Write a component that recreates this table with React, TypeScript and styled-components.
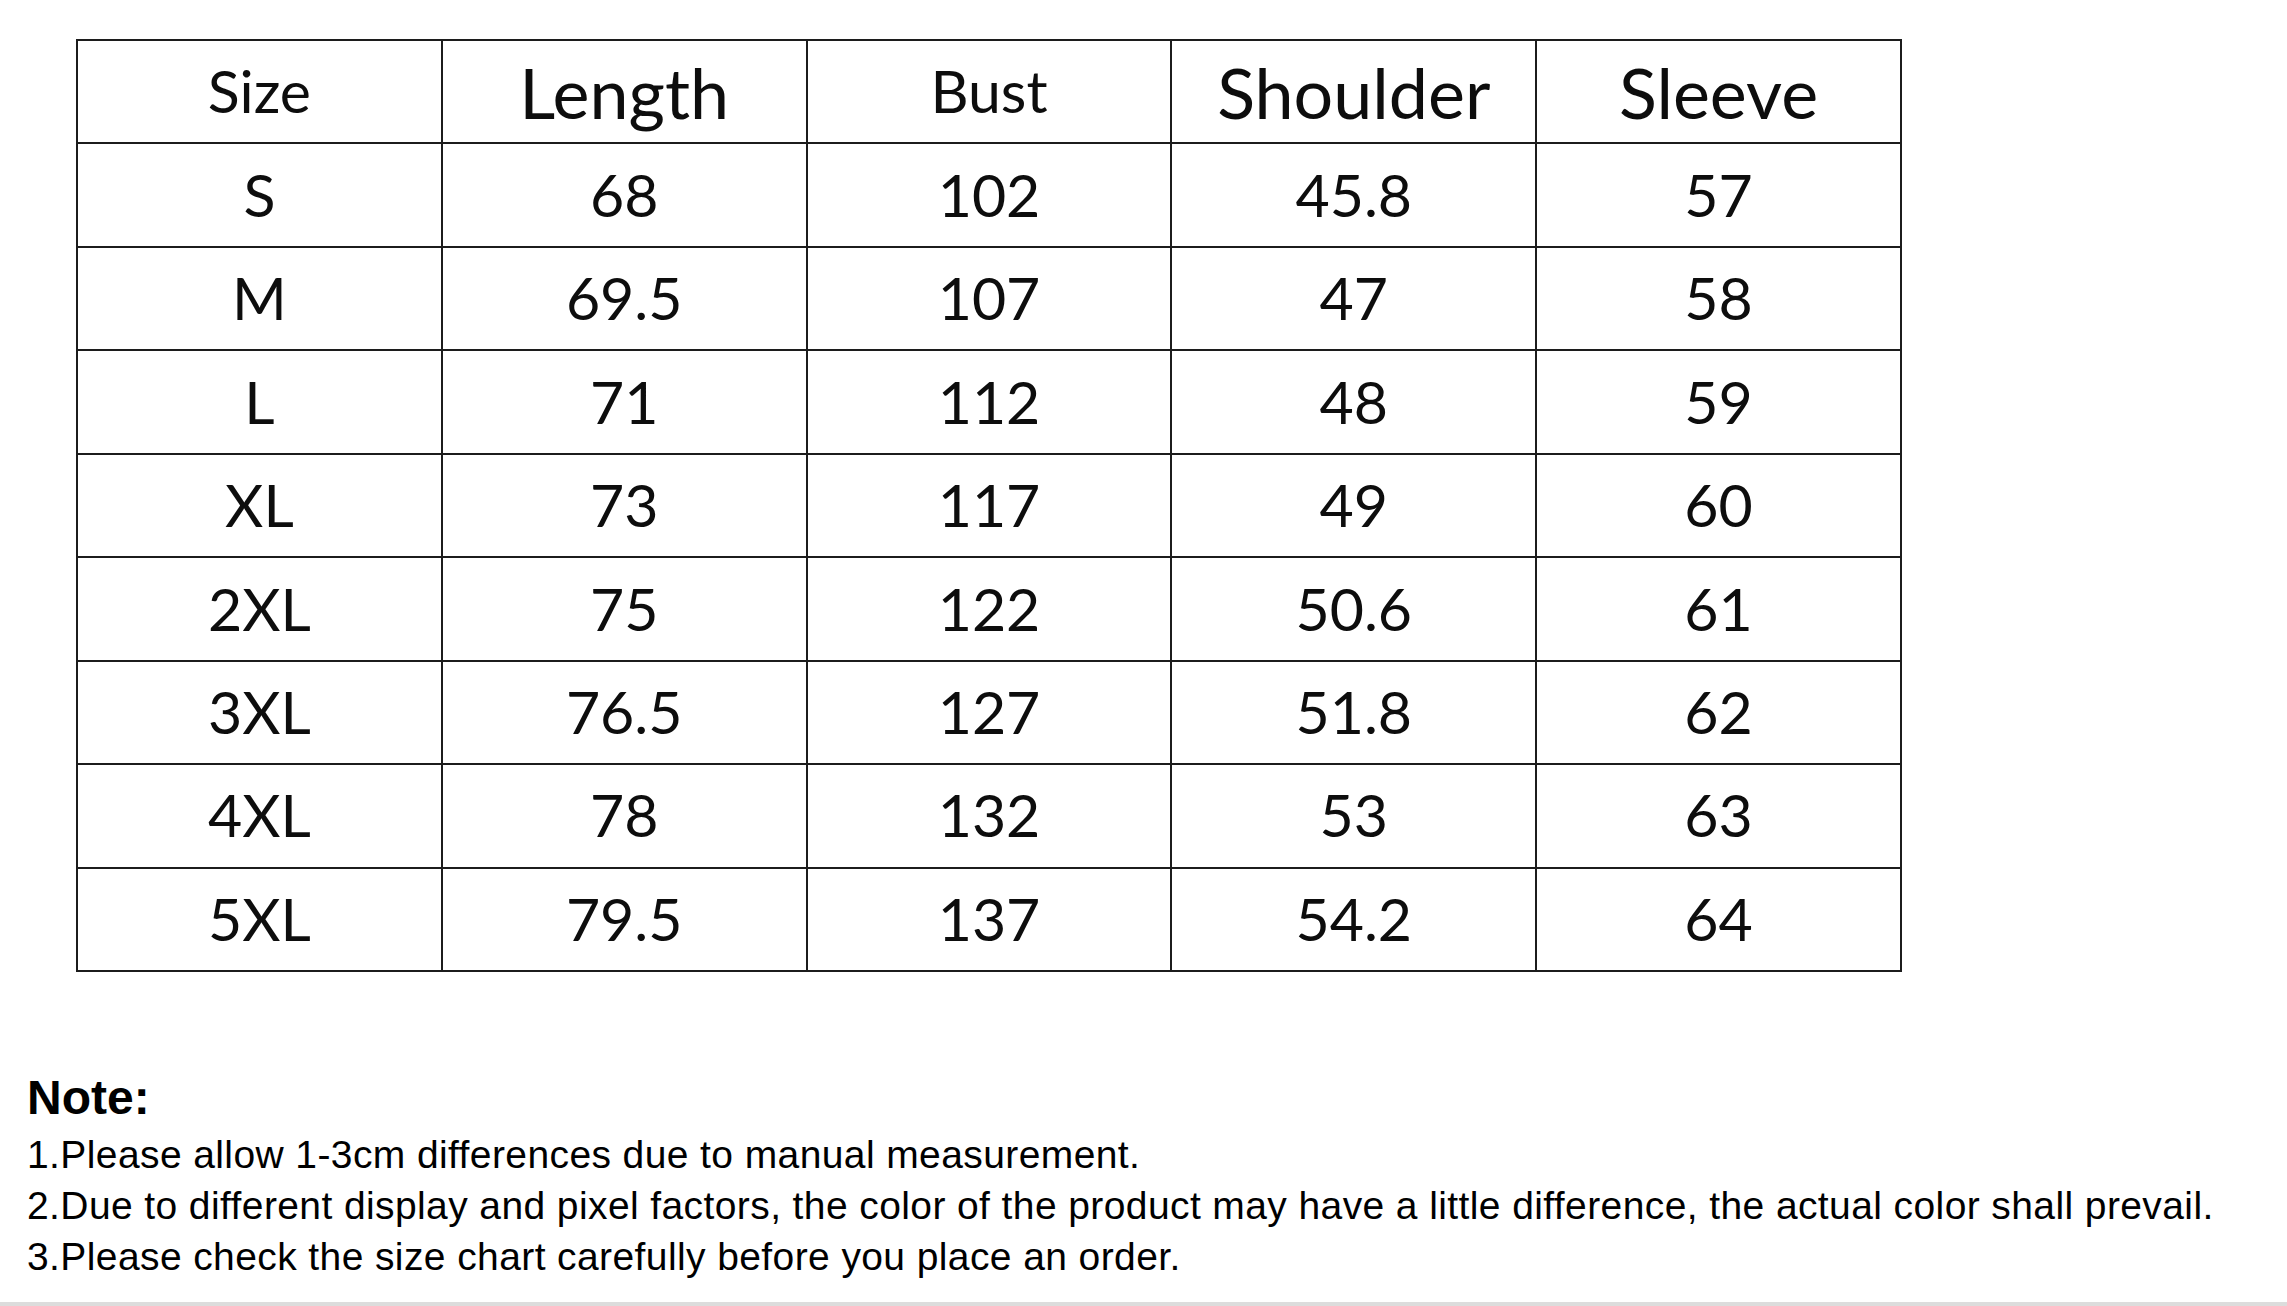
import styled, { createGlobalStyle } from 'styled-components';

const GlobalStyle = createGlobalStyle`
  html, body {
    margin: 0;
    padding: 0;
    background: #fff;
  }
`;

const headers = [
  { label: 'Size', large: false },
  { label: 'Length', large: true },
  { label: 'Bust', large: false },
  { label: 'Shoulder', large: true },
  { label: 'Sleeve', large: true },
];

const rows = [
  ['S', '68', '102', '45.8', '57'],
  ['M', '69.5', '107', '47', '58'],
  ['L', '71', '112', '48', '59'],
  ['XL', '73', '117', '49', '60'],
  ['2XL', '75', '122', '50.6', '61'],
  ['3XL', '76.5', '127', '51.8', '62'],
  ['4XL', '78', '132', '53', '63'],
  ['5XL', '79.5', '137', '54.2', '64'],
];

const notes = [
  '1.Please allow 1-3cm differences due to manual measurement.',
  '2.Due to different display and pixel factors, the color of the product may have a little difference, the actual color shall prevail.',
  '3.Please check the size chart carefully before you place an order.',
];

const App = () => {
  return (
    <Page>
      <GlobalStyle />
      <Chart>
        {headers.map((h) => (
          <Cell key={h.label} $large={h.large}>
            {h.label}
          </Cell>
        ))}
        {rows.map((row) =>
          row.map((value, i) => <Cell key={row[0] + i}>{value}</Cell>)
        )}
      </Chart>

      <Notes>
        <NoteTitle>Note:</NoteTitle>
        {notes.map((n) => (
          <NoteLine key={n}>{n}</NoteLine>
        ))}
      </Notes>

      <BottomBar />
    </Page>
  );
};

const Page = styled.div`
  width: 2287px;
  height: 1306px;
  overflow: hidden;
  padding-top: 39px;
  box-sizing: border-box;
`;

const Chart = styled.div`
  margin-left: 76px;
  width: 1826px;
  height: 933px;
  box-sizing: border-box;
  display: grid;
  grid-template-columns: repeat(5, 1fr);
  grid-template-rows: repeat(9, 1fr);
  gap: 2px;
  padding: 2px;
  background: #1c1c1c;
`;

const Cell = styled.div<{ $large?: boolean }>`
  display: flex;
  align-items: center;
  justify-content: center;
  background: #fff;
  color: #0d0d0d;
  font-family: Lato, 'Open Sans', sans-serif;
  font-size: ${(p) => (p.$large ? '70px' : '59px')};
  line-height: 1.2;
`;

const Notes = styled.div`
  margin-top: 98px;
  padding-left: 27px;
  font-family: 'Liberation Sans', Arial, sans-serif;
  color: #000;
`;

const NoteTitle = styled.div`
  font-size: 48px;
  font-weight: 700;
  line-height: 56px;
  margin-bottom: 3px;
`;

const NoteLine = styled.div`
  font-size: 39px;
  line-height: 51px;
  letter-spacing: 0.4px;
  white-space: nowrap;
`;

const BottomBar = styled.div`
  margin-top: 20px;
  height: 4px;
  background: #dcdcdc;
`;

export default App;
